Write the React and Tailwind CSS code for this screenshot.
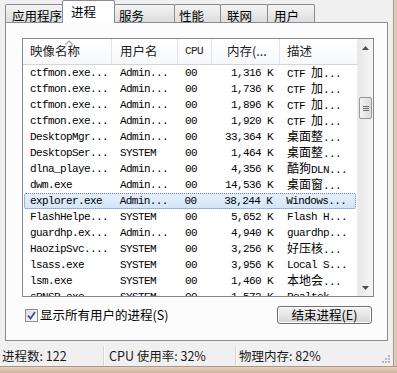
import React from "react";

const tabs = [
  { label: "应用程序", w: "w-[58px]", pl: "pl-[6px]" },
  { label: "进程", w: "w-[53px]", pl: "pl-[8px]", active: true },
  { label: "服务", w: "w-[61px]", pl: "pl-[4px]" },
  { label: "性能", w: "w-[47px]", pl: "pl-[4px]" },
  { label: "联网", w: "w-[48px]", pl: "pl-[6px]" },
  { label: "用户", w: "w-[48px]", pl: "pl-[6px]" },
];

const rows = [
  ["ctfmon.exe...", "Admin...", "00", "1,316 K", "CTF 加..."],
  ["ctfmon.exe...", "Admin...", "00", "1,736 K", "CTF 加..."],
  ["ctfmon.exe...", "Admin...", "00", "1,896 K", "CTF 加..."],
  ["ctfmon.exe...", "Admin...", "00", "1,920 K", "CTF 加..."],
  ["DesktopMgr...", "Admin...", "00", "33,364 K", "桌面整..."],
  ["DesktopSer...", "SYSTEM", "00", "1,464 K", "桌面整..."],
  ["dlna_playe...", "Admin...", "00", "4,356 K", "酷狗DLN..."],
  ["dwm.exe", "Admin...", "00", "14,536 K", "桌面窗..."],
  ["explorer.exe", "Admin...", "00", "38,244 K", "Windows..."],
  ["FlashHelpe...", "SYSTEM", "00", "5,652 K", "Flash H..."],
  ["guardhp.ex...", "Admin...", "00", "4,940 K", "guardhp..."],
  ["HaozipSvc....", "SYSTEM", "00", "3,256 K", "好压核..."],
  ["lsass.exe", "SYSTEM", "00", "3,956 K", "Local S..."],
  ["lsm.exe", "SYSTEM", "00", "1,460 K", "本地会..."],
  ["sPNSR.exe", "SYSTEM", "00", "1,572 K", "Realtek..."],
];

// SimSun-ish: half-width latin, full-width CJK
function Mixed({ text }) {
  const parts = text.split(/([\u4e00-\u9fff]+)/);
  return parts.map((p, i) =>
    i % 2 ? (
      <span key={i} className="font-['Noto_Sans_CJK_SC',sans-serif] text-[12px] tracking-normal">
        {p}
      </span>
    ) : (
      <span key={i}>{p}</span>
    )
  );
}

export default function App() {
  return (
    <div className="w-[397px] h-[373px] bg-[#f0f0f0] flex flex-col overflow-hidden font-['Noto_Sans_CJK_SC',sans-serif] text-black">
      <div className="flex h-[366px]">
        {/* left part */}
        <div className="w-[393px] flex flex-col">
          {/* tabs */}
          <div className="flex items-end h-[23px] pl-[5px]">
            {tabs.map((t) =>
              t.active ? (
                <div
                  key={t.label}
                  className={`${t.w} ${t.pl} relative z-10 -ml-px h-[23px] bg-white border border-b-0 border-[#898c95] rounded-t-[2px] text-[12.5px] leading-[20px] pt-[1px]`}
                >
                  {t.label}
                </div>
              ) : (
                <div
                  key={t.label}
                  className={`${t.w} ${t.pl} -ml-px first:ml-0 h-[19px] bg-linear-to-b from-[#f4f4f4] to-[#dcdcdc] border border-b-0 border-[#898c95] rounded-t-[2px] text-[12.5px] leading-[19px] pt-[1px]`}
                >
                  {t.label}
                </div>
              )
            )}
          </div>

          {/* panel */}
          <div className="ml-[5px] -mt-px w-[383px] h-[319px] border border-[#898c95] bg-[#fcfcfc] pl-[16px] pt-[15px]">
            {/* list box */}
            <div className="w-[352px] h-[259px] border border-[#828790] bg-white flex">
              <div className="w-[334px] flex flex-col overflow-hidden">
                {/* header */}
                <div className="flex h-[26px] shrink-0 border-b border-[#d5d5d5] bg-linear-to-b from-white to-[#f7f8fa] text-[12.5px] text-[#222]">
                  <div className="relative w-[89px] pl-[7px] flex items-center border-r border-[#e3e4e6]">
                    <svg className="absolute left-[42px] top-[1px]" width="8" height="5" viewBox="0 0 8 5">
                      <path d="M0.5 4.5 L4 1 L7.5 4.5" fill="none" stroke="#9da4ad" strokeWidth="1.2" />
                    </svg>
                    映像名称
                  </div>
                  <div className="w-[66px] pl-[8px] flex items-center border-r border-[#e3e4e6]">用户名</div>
                  <div className="w-[34px] pl-[7px] flex items-center border-r border-[#e3e4e6] font-['Liberation_Mono',monospace] text-[11px] tracking-[-0.6px]">
                    CPU
                  </div>
                  <div className="w-[68px] pl-[15px] flex items-center border-r border-[#e3e4e6] whitespace-nowrap">
                    内存(...
                  </div>
                  <div className="w-[77px] pl-[7px] flex items-center">描述</div>
                </div>

                {/* rows */}
                {rows.map((r, i) => (
                  <div
                    key={i}
                    className={`flex shrink-0 h-4 items-center text-[11px] leading-4 tracking-[-0.6px] font-['Liberation_Mono','Noto_Sans_CJK_SC',monospace] whitespace-nowrap ${
                      i === 8
                        ? "bg-linear-to-b from-[#e6f0fc] to-[#d3e4f8] outline-1 outline-dotted outline-[#5f84b8] -outline-offset-1 rounded-[2px] mx-px"
                        : ""
                    }`}
                  >
                    <div className={`${i === 8 ? "w-[88px] pl-[6px]" : "w-[89px] pl-[7px]"} overflow-hidden`}>{r[0]}</div>
                    <div className="w-[66px] pl-[8px] overflow-hidden">{r[1]}</div>
                    <div className="w-[34px] pl-[7px]">{r[2]}</div>
                    <div className="w-[68px] pr-[7px] text-right">{r[3]}</div>
                    <div className="w-[77px] pl-[7px] overflow-hidden">
                      <Mixed text={r[4]} />
                    </div>
                  </div>
                ))}
              </div>

              {/* scrollbar */}
              <div className="w-[16px] flex flex-col bg-linear-to-r from-[#e8e8e8] to-[#f5f5f5] border-l border-[#ececec]">
                <div className="h-[17px] flex items-center justify-center">
                  <svg width="7" height="4" viewBox="0 0 7 4">
                    <path d="M0 4 L3.5 0 L7 4 Z" fill="#4d4d4d" />
                  </svg>
                </div>
                <div className="h-[41px]" />
                <div className="h-[22px] mx-px rounded-[2px] border border-[#979797] bg-linear-to-r from-[#f3f3f3] to-[#dcdcdc] flex flex-col items-center justify-center gap-[1px]">
                  <div className="w-[6px] h-px bg-[#6b6b6b]" />
                  <div className="w-[6px] h-px bg-[#6b6b6b]" />
                  <div className="w-[6px] h-px bg-[#6b6b6b]" />
                </div>
                <div className="flex-1" />
                <div className="h-[17px] flex items-center justify-center">
                  <svg width="7" height="4" viewBox="0 0 7 4">
                    <path d="M0 0 L3.5 4 L7 0 Z" fill="#4d4d4d" />
                  </svg>
                </div>
              </div>
            </div>

            {/* checkbox + button */}
            <div className="w-[352px] mt-[9px] flex items-center justify-between pl-[3px] pr-[2px]">
              <div className="flex items-center gap-[2px] text-[12.5px]">
                <div className="w-[13px] h-[13px] border border-[#8f8f8f] bg-linear-to-br from-[#dcdcdc] to-white flex items-center justify-center">
                  <svg width="9" height="9" viewBox="0 0 9 9">
                    <path d="M1 4.5 L3.5 7.5 L8 1" fill="none" stroke="#2a4fb0" strokeWidth="1.8" />
                  </svg>
                </div>
                <span>显示所有用户的进程(S)</span>
              </div>
              <div className="w-[95px] h-[18px] rounded-[3px] border border-[#707070] bg-linear-to-b from-[#f2f2f2] via-[#e6e6e6] to-[#d4d4d4] flex items-center justify-center text-[12.5px] leading-none shadow-[inset_0_0_0_1px_#fcfcfc]">
                结束进程(E)
              </div>
            </div>
          </div>

          {/* status bar */}
          <div className="mt-[5px] flex-1 flex items-center text-[12.5px] text-[#1a1a1a]">
            <div className="w-[103px] pl-[2px] h-full flex items-center">进程数: 122</div>
            <div className="w-[132px] pl-[5px] h-full flex items-center border-l border-[#d5d5d5] shadow-[inset_1px_0_0_#fff]">
              CPU 使用率: 32%
            </div>
            <div className="flex-1 pl-[3px] h-full flex items-center justify-between border-l border-[#d5d5d5] shadow-[inset_1px_0_0_#fff]">
              <span>物理内存: 82%</span>
              <svg className="self-end mb-[2px] mr-[2px]" width="10" height="10" viewBox="0 0 10 10">
                <rect x="7" y="1" width="2" height="2" fill="#b8b8b8" />
                <rect x="4" y="4" width="2" height="2" fill="#b8b8b8" />
                <rect x="7" y="4" width="2" height="2" fill="#b8b8b8" />
                <rect x="1" y="7" width="2" height="2" fill="#b8b8b8" />
                <rect x="4" y="7" width="2" height="2" fill="#b8b8b8" />
                <rect x="7" y="7" width="2" height="2" fill="#b8b8b8" />
              </svg>
            </div>
          </div>
        </div>

        {/* right window frame */}
        <div className="w-[4px] border-l border-[#a99886] bg-linear-to-r from-[#e5d3c2] to-[#d6bfa9]" />
      </div>

      {/* bottom window frame */}
      <div className="flex-1 border-t border-[#a99886] bg-linear-to-b from-[#e5d3c2] to-[#cdb49c]" />
    </div>
  );
}
